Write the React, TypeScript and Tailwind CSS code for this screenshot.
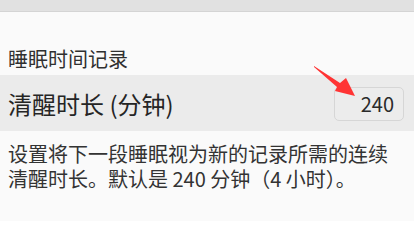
export default function App() {
  return (
    <main
      className="relative h-[221px] w-[414px] overflow-hidden bg-[#fafafa] text-[#2a2a2a]"
      style={{ fontFamily: '"Noto Sans CJK SC", "Noto Sans", sans-serif' }}
    >
      {/* top bar */}
      <div className="h-[12px] border-b border-[#d4d4d4] bg-[#e1e1e1]" />

      {/* section header */}
      <div className="flex h-[63px] items-end px-2 pb-[2px]">
        <h2 className="text-[20px] leading-[28px] text-[#303030]">睡眠时间记录</h2>
      </div>

      {/* setting row */}
      <div className="flex h-[56px] items-center justify-between bg-[#ebebeb] pl-2 pr-[10px] pt-[2px]">
        <span className="text-[24px] leading-[32px] text-[#252525]">清醒时长 (分钟)</span>
        <div className="flex h-[34px] w-[70px] items-center justify-end rounded-[5px] border border-[#d6d6d6] bg-[#ececec] pr-[9px] text-[20px] leading-none text-[#2a2a2a]">
          240
        </div>
      </div>

      {/* description */}
      <p className="px-2 pt-[10px] text-[20px] leading-[25px] text-[#333333]">
        设置将下一段睡眠视为新的记录所需的连续清醒时长。默认是 240 分钟（4 小时）。
      </p>

      {/* annotation arrow */}
      <svg className="absolute left-[300px] top-[60px]" width="60" height="40" viewBox="0 0 60 40">
        <polygon points="14,6 40,23 46,18 55,36 35,31 37,27 14,7" fill="#ff3434" />
      </svg>
    </main>
  );
}
